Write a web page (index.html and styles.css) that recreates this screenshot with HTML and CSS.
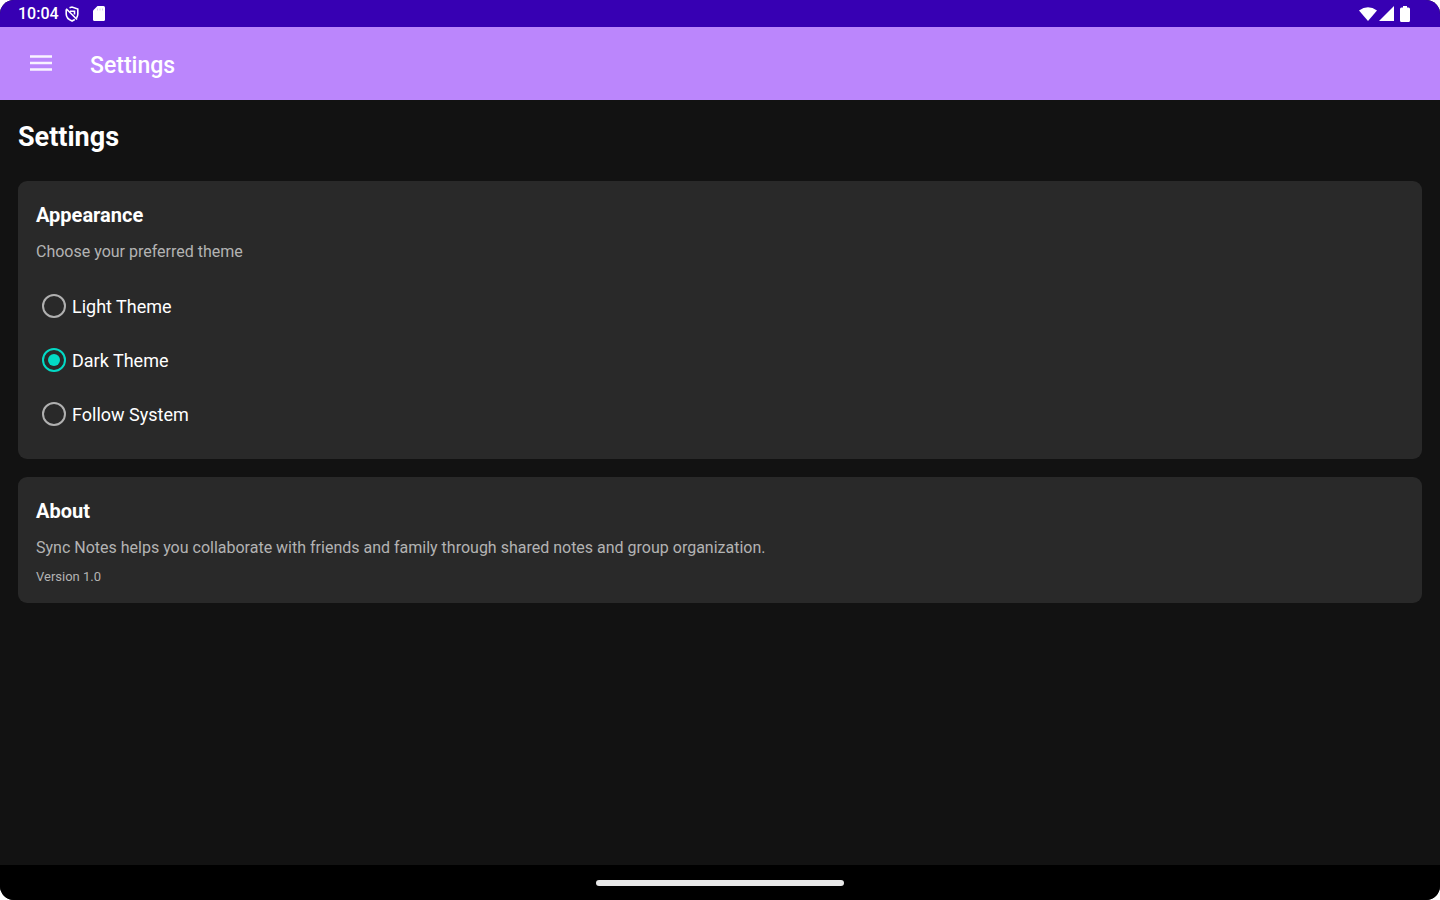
FILE: index.html
```html
<!DOCTYPE html>
<html lang="en">
<head>
<meta charset="utf-8">
<meta name="viewport" content="width=device-width, initial-scale=1">
<title>Settings</title>
<link rel="stylesheet" href="styles.css">
</head>
<body>
<div class="screen">
  <div class="status-bar">
    <div class="status-group">
      <span class="clock">10:04</span>
      <svg class="icon-shield" viewBox="0 0 14 16" width="14" height="16" aria-hidden="true">
        <path d="M4.500 1.800 7 1 12.800 3V8C12.800 9.500 12.300 10.800 11.500 12M9.800 13.500 7 15C3.600 13.600 1.200 11 1.200 8V3.500" fill="none" stroke="#fff" stroke-width="1.600"/>
        <path d="M1.200 2.800 12 13.500M5 5.200H9.500V8.500" fill="none" stroke="#fff" stroke-width="1.600"/>
      </svg>
      <svg class="icon-card" viewBox="0 0 12 15" width="12" height="15" aria-hidden="true">
        <path d="M4.500 0H10.500Q12 0 12 1.500V13.500Q12 15 10.500 15H1.500Q0 15 0 13.500V4.500Z" fill="#fff"/>
        <path d="M4.500 2.500V4.500M7 2.500V4.500M9.500 2.500V4.500" stroke="#d6c8f2" stroke-width="1"/>
      </svg>
    </div>
    <div class="status-group status-right">
      <svg viewBox="0 0 18 14" width="18" height="14" aria-hidden="true"><path d="M0 3.500Q9-3 18 3.500L9 14Z" fill="#fff"/></svg>
      <svg viewBox="0 0 15 15" width="15" height="15" aria-hidden="true"><path d="M15 0V15H0Z" fill="#fff"/></svg>
      <svg class="icon-battery" viewBox="0 0 10 16" width="10" height="16" aria-hidden="true"><path d="M3 0H7V1.500H8.500Q10 1.500 10 3V14.500Q10 16 8.500 16H1.500Q0 16 0 14.500V3Q0 1.500 1.500 1.500H3Z" fill="#fff"/></svg>
    </div>
  </div>
  <header class="app-bar">
    <button class="menu-button" type="button" aria-label="Open menu">
      <svg viewBox="0 0 22 18" width="22" height="18" aria-hidden="true">
        <path d="M0 2.500H22M0 9H22M0 15.500H22" stroke="#fff" stroke-opacity=".9" stroke-width="2.500"/>
      </svg>
    </button>
    <span class="app-title">Settings</span>
  </header>
  <main class="content">
    <h1 class="page-title">Settings</h1>
    <section class="card">
      <h2 class="card-title">Appearance</h2>
      <p class="card-text" id="theme-hint">Choose your preferred theme</p>
      <div class="options" role="radiogroup" aria-labelledby="theme-hint">
        <label class="option"><input class="radio" type="radio" name="theme"><span>Light Theme</span></label>
        <label class="option"><input class="radio" type="radio" name="theme" checked><span>Dark Theme</span></label>
        <label class="option"><input class="radio" type="radio" name="theme"><span>Follow System</span></label>
      </div>
    </section>
    <section class="card">
      <h2 class="card-title">About</h2>
      <p class="card-text">Sync Notes helps you collaborate with friends and family through shared notes and group organization.</p>
      <p class="version">Version 1.0</p>
    </section>
  </main>
  <div class="nav-bar"><div class="nav-handle"></div></div>
</div>
</body>
</html>
```
FILE: styles.css
```css
* { box-sizing: border-box; }
body {
  margin: 0;
  background: #fff;
  font-family: Roboto, "Liberation Sans", sans-serif;
}
h1, h2, p { margin: 0; }
svg { display: block; }
.screen {
  display: flex;
  flex-direction: column;
  min-height: 100vh;
  background: #121212;
  border-radius: 14px;
  overflow: hidden;
}
.status-bar {
  display: flex;
  justify-content: space-between;
  align-items: center;
  height: 27px;
  padding: 0 30px 0 18px;
  background: #3700b3;
  color: #fff;
}
.status-group { display: flex; align-items: center; }
.status-right { gap: 2px; }
.clock { font-size: 16px; line-height: 27px; font-weight: 500; }
.icon-shield { margin-left: 6px; }
.icon-card { margin-left: 14px; }
.icon-battery { margin-left: 4px; }
.app-bar {
  display: flex;
  align-items: center;
  gap: 34px;
  height: 73px;
  padding: 0 26px;
  background: #bb86fc;
  color: #fff;
}
.menu-button {
  padding: 4px 4px 6px;
  border: 0;
  background: none;
}
.app-title { font-size: 23px; line-height: 32px; font-weight: 500; padding-top: 4px; }
.content {
  flex: 1;
  display: flex;
  flex-direction: column;
  gap: 18px;
  padding: 18px;
}
.page-title {
  margin-bottom: 6px;
  color: #fff;
  font-size: 27px;
  line-height: 39px;
  font-weight: 700;
}
.card {
  padding: 18px;
  border-radius: 9px;
  background: #292929;
}
.card-title { color: #fff; font-size: 20px; line-height: 32px; font-weight: 700; }
.card-text { margin-top: 10px; color: #b3b3b3; font-size: 16px; line-height: 22px; }
.options { margin-top: 16px; }
.option {
  display: flex;
  align-items: center;
  gap: 6px;
  height: 54px;
  padding-left: 6px;
  color: #fff;
  font-size: 18px;
}
.radio {
  appearance: none;
  display: grid;
  place-items: center;
  width: 24px;
  height: 24px;
  margin: 0;
  border: 2px solid #b0b0b0;
  border-radius: 50%;
}
.radio:checked { border-color: #03dac5; }
.radio:checked::before {
  content: "";
  width: 12px;
  height: 12px;
  border-radius: 50%;
  background: #03dac5;
}
.version { margin-top: 10px; color: #b3b3b3; font-size: 13px; line-height: 16px; }
.nav-bar {
  display: flex;
  justify-content: center;
  align-items: center;
  height: 35px;
  background: #000;
}
.nav-handle { width: 248px; height: 6px; border-radius: 3px; background: #e8e8e8; }
```
